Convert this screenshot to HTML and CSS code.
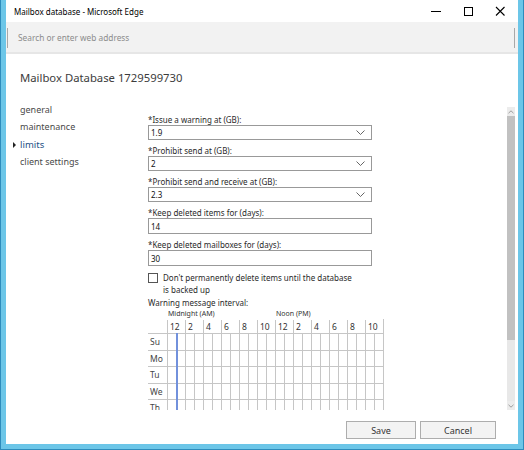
FILE: index.html
```html
<!DOCTYPE html>
<html lang="en">
<head>
<meta charset="utf-8">
<title>Mailbox database</title>
<link rel="stylesheet" href="styles.css">
</head>
<body>
<div class="frame">
  <div class="window">
    <div class="titlebar">
      <span class="title">Mailbox database - Microsoft Edge</span>
      <div class="controls">
        <svg class="ctl" width="32" height="22" viewBox="0 0 32 22"><path d="M11 11.5h10" stroke="#000" stroke-width="1"/></svg>
        <svg class="ctl" width="32" height="22" viewBox="0 0 32 22"><rect x="12.5" y="7.5" width="8" height="8" fill="none" stroke="#000" stroke-width="1"/></svg>
        <svg class="ctl" width="32" height="22" viewBox="0 0 32 22"><path d="M12 7l8.5 8.5M20.5 7L12 15.5" stroke="#000" stroke-width="1.1"/></svg>
      </div>
    </div>
    <div class="addressbar">
      <div class="address">Search or enter web address</div>
    </div>
    <div class="page">
      <h1 class="heading">Mailbox Database 1729599730</h1>
      <div class="main">
        <nav class="nav">
          <div class="nav-item">general</div>
          <div class="nav-item">maintenance</div>
          <div class="nav-item active">limits</div>
          <div class="nav-item">client settings</div>
        </nav>
        <div class="panel">
          <div class="form">
            <div class="field">
              <div class="label">*Issue a warning at (GB):</div>
              <div class="select"><span>1.9</span><svg class="chev" width="9" height="5" viewBox="0 0 9 5"><path d="M0.5 0.5L4.5 4.5L8.5 0.5" fill="none" stroke="#555" stroke-width="0.9"/></svg></div>
            </div>
            <div class="field">
              <div class="label">*Prohibit send at (GB):</div>
              <div class="select"><span>2</span><svg class="chev" width="9" height="5" viewBox="0 0 9 5"><path d="M0.5 0.5L4.5 4.5L8.5 0.5" fill="none" stroke="#555" stroke-width="0.9"/></svg></div>
            </div>
            <div class="field">
              <div class="label">*Prohibit send and receive at (GB):</div>
              <div class="select"><span>2.3</span><svg class="chev" width="9" height="5" viewBox="0 0 9 5"><path d="M0.5 0.5L4.5 4.5L8.5 0.5" fill="none" stroke="#555" stroke-width="0.9"/></svg></div>
            </div>
            <div class="field">
              <div class="label">*Keep deleted items for (days):</div>
              <div class="input">14</div>
            </div>
            <div class="field">
              <div class="label">*Keep deleted mailboxes for (days):</div>
              <div class="input">30</div>
            </div>
            <div class="check-row">
              <span class="checkbox"></span>
              <span class="check-text">Don't permanently delete items until the database<br>is backed up</span>
            </div>
            <div class="label interval">Warning message interval:</div>
            <div class="schedule">
              <div class="period-row">
                <span class="period am">Midnight (AM)</span>
                <span class="period pm">Noon (PM)</span>
              </div>
              <div class="hours-row">
                <span class="day-head"></span>
                <div class="hours">
                  <span class="hour">12</span><span class="hour">2</span><span class="hour">4</span><span class="hour">6</span><span class="hour">8</span><span class="hour">10</span><span class="hour">12</span><span class="hour">2</span><span class="hour">4</span><span class="hour">6</span><span class="hour">8</span><span class="hour">10</span>
                </div>
              </div>
              <div class="day-row"><span class="day">Su</span><div class="cells"></div></div>
              <div class="day-row"><span class="day">Mo</span><div class="cells"></div></div>
              <div class="day-row"><span class="day">Tu</span><div class="cells"></div></div>
              <div class="day-row"><span class="day">We</span><div class="cells"></div></div>
              <div class="day-row"><span class="day">Th</span><div class="cells"></div></div>
            </div>
          </div>
          <div class="scrollbar">
            <div class="sb-arrow"><svg width="6" height="4" viewBox="0 0 6 4"><path d="M0.5 3.2L3 0.8L5.5 3.2" fill="none" stroke="#888" stroke-width="0.8"/></svg></div>
            <div class="sb-thumb"></div>
            <div class="sb-track"></div>
            <div class="sb-arrow"><svg width="6" height="4" viewBox="0 0 6 4"><path d="M0.5 0.8L3 3.2L5.5 0.8" fill="none" stroke="#888" stroke-width="0.8"/></svg></div>
          </div>
        </div>
      </div>
      <div class="footer">
        <button class="btn save">Save</button>
        <button class="btn cancel">Cancel</button>
      </div>
    </div>
  </div>
</div>
</body>
</html>
```
FILE: styles.css
```css
* { box-sizing: border-box; }
html, body { margin: 0; padding: 0; }
body {
  font-family: "Noto Sans", "Open Sans", sans-serif;
  color: #222;
  background: #6cc6e8;
}
.frame {
  width: 524px;
  height: 450px;
  background: #6cc6e8;
  border: 1px solid #2e8cbc;
  border-top: none;
  padding: 0 5px 5px 5px;
}
.window {
  width: 512px;
  height: 444px;
  background: #fff;
  display: flex;
  flex-direction: column;
}
.titlebar {
  height: 22px;
  flex: none;
  display: flex;
  align-items: center;
  justify-content: space-between;
  padding-left: 8px;
}
.title { font-size: 8px; color: #000; }
.controls { display: flex; height: 22px; margin-right: 2px; }
.ctl { display: block; }
.addressbar {
  height: 32px;
  flex: none;
  background: #f2f2f2;
  border-bottom: 2px solid #e6e6e6;
  padding: 6px 3px 0 1px;
}
.address {
  height: 20px;
  border-left: 1px solid #a8a8a8;
  border-right: 1px solid #a8a8a8;
  padding-left: 10px;
  font-size: 8.3px;
  line-height: 19px;
  color: #8c8c8c;
}
.page {
  flex: 1;
  display: flex;
  flex-direction: column;
  min-height: 0;
}
.heading {
  margin: 0;
  padding: 16px 0 0 14px;
  height: 46px;
  flex: none;
  font-size: 11.3px;
  line-height: 16px;
  font-weight: 400;
  color: #3c3c3c;
}
.main {
  height: 310px;
  flex: none;
  display: flex;
}
.nav {
  width: 134px;
  flex: none;
  padding: 1px 0 0 14px;
}
.nav-item {
  position: relative;
  font-size: 9px;
  line-height: 17.3px;
  color: #4a4a4a;
}
.nav-item.active { color: #1d4f85; font-size: 9.5px; }
.nav-item.active::before {
  content: "";
  position: absolute;
  left: -7px;
  top: 6px;
  border-left: 3px solid #222;
  border-top: 3px solid transparent;
  border-bottom: 3px solid transparent;
}
.panel {
  flex: 1;
  margin-top: 7px;
  height: 303px;
  display: flex;
  min-width: 0;
}
.form {
  flex: 1;
  overflow: hidden;
  padding: 7px 0 0 8px;
}
.field { margin-bottom: 5px; width: 224px; }
.label {
  font-size: 8px;
  line-height: 11px;
  color: #2a2a2a;
  white-space: nowrap;
}
.select, .input {
  border: 1px solid #999;
  display: flex;
  align-items: center;
  justify-content: space-between;
  padding: 0 4px 0 2px;
  font-size: 8px;
  color: #111;
}
.select { height: 15px; }
.input { height: 16px; }
.chev { display: block; margin-right: 2px; }
.check-row {
  display: flex;
  align-items: flex-start;
  margin-top: 6px;
}
.checkbox {
  width: 10px;
  height: 10px;
  border: 1px solid #555;
  margin: 1px 5px 0 0;
  flex: none;
}
.check-text {
  font-size: 8px;
  line-height: 12px;
  color: #2a2a2a;
}
.interval { margin-top: 1px; line-height: 12px; }
.schedule { width: 236px; }
.period-row {
  height: 10px;
  position: relative;
  font-size: 7px;
  line-height: 10px;
  color: #333;
}
.period { position: absolute; top: 0; }
.period.am { left: 20px; }
.period.pm { left: 128px; }
.hours-row {
  display: flex;
  height: 14px;
}
.day-head { width: 19px; flex: none; }
.hours {
  display: flex;
  width: 217px;
  padding-top: 1px;
  border-right: 1px solid #c6c6c6;
}
.hour {
  width: 18px;
  border-left: 1px solid #c6c6c6;
  padding-left: 2px;
  font-size: 8.5px;
  line-height: 13px;
  color: #333;
}
.day-row {
  display: flex;
  height: 16.5px;
  border-top: 1px solid #c6c6c6;
}
.day {
  width: 19px;
  flex: none;
  padding-left: 2px;
  font-size: 8.5px;
  line-height: 15px;
  color: #444;
}
.cells {
  position: relative;
  width: 217px;
  background: repeating-linear-gradient(to right, #c6c6c6 0, #c6c6c6 1px, transparent 1px, transparent 9px);
}
.cells::after {
  content: "";
  position: absolute;
  left: 9px;
  top: -1px;
  bottom: 0;
  width: 2px;
  background: #7291dc;
}
.scrollbar {
  width: 8px;
  flex: none;
  margin-right: 3px;
  display: flex;
  flex-direction: column;
  background: #e8e8e8;
}
.sb-arrow {
  height: 9px;
  display: flex;
  align-items: center;
  justify-content: center;
  background: #ececec;
}
.sb-thumb { height: 224px; background: #c1c1c1; }
.sb-track { flex: 1; background: #e8e8e8; }
.footer {
  flex: 1;
  display: flex;
  justify-content: flex-end;
  align-items: flex-start;
  padding: 11px 22px 0 0;
  gap: 4px;
}
.btn {
  height: 18px;
  border: 1px solid #adadad;
  background: #f3f3f3;
  font-family: "Noto Sans", "Open Sans", sans-serif;
  font-size: 9px;
  color: #333;
  padding: 0;
}
.save { width: 70px; }
.cancel { width: 76px; }
```
